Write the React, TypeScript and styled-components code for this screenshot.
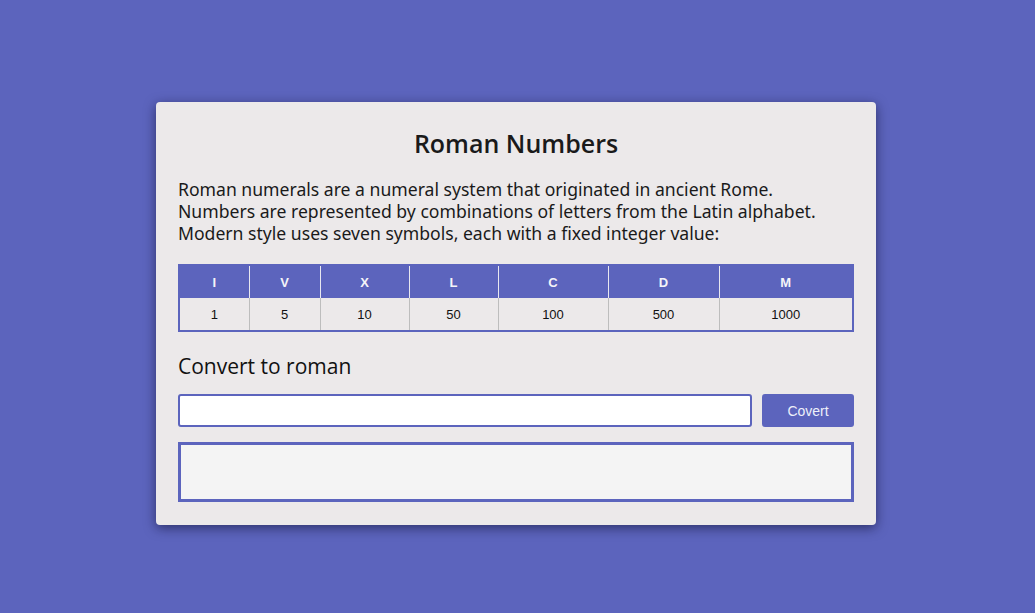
import React, { useState } from "react";
import styled, { createGlobalStyle } from "styled-components";

const Global = createGlobalStyle`
  html, body { margin: 0; padding: 0; background: #5c64bd; }
  * { box-sizing: border-box; }
`;

const Page = styled.div`
  min-height: 613px;
  display: flex;
  justify-content: center;
  align-items: flex-start;
  padding-top: 102px;
`;

const Card = styled.div`
  width: 720px;
  background: #ece9ea;
  border-radius: 4px;
  box-shadow: 0 3px 12px rgba(15, 15, 50, 0.6);
  padding: 22px 22px 23px;
  margin-left: -3px;
`;

const Title = styled.h1`
  margin: 0;
  text-align: center;
  font-family: "Open Sans", sans-serif;
  font-weight: 600;
  font-size: 25px;
  line-height: 38px;
  color: #1a1a1a;
`;

const Intro = styled.p`
  margin: 16px 0 0;
  font-family: "Noto Sans", sans-serif;
  font-size: 17.6px;
  line-height: 22px;
  color: #1a1a1a;
`;

const Table = styled.table`
  margin-top: 20px;
  width: 100%;
  border-collapse: collapse;
  border: 2px solid #5c64bd;
  font-family: "Liberation Sans", Arial, sans-serif;
  font-size: 13px;
`;

const Th = styled.th<{ $w: number }>`
  width: ${(p) => p.$w}px;
  height: 33px;
  background: #5c64bd;
  color: #f4f4f8;
  font-weight: bold;
  text-align: center;
  border-left: 1px solid #e8e8f0;
  &:first-child { border-left: none; }
`;

const Td = styled.td`
  height: 33px;
  text-align: center;
  color: #111;
  border-left: 1px solid #bdbdbd;
  &:first-child { border-left: none; }
`;

const Subtitle = styled.h2`
  margin: 20px 0 0;
  font-family: "Open Sans", sans-serif;
  font-weight: 400;
  font-size: 21px;
  line-height: 28px;
  color: #111;
`;

const Row = styled.div`
  display: flex;
  gap: 10px;
  margin-top: 14px;
`;

const Input = styled.input`
  flex: 1;
  height: 33px;
  border: 2px solid #5c64bd;
  border-radius: 3px;
  background: #fff;
  outline: none;
  font-family: "Liberation Sans", Arial, sans-serif;
  font-size: 14px;
  padding: 0 8px;
`;

const Button = styled.button`
  width: 92px;
  height: 33px;
  border: none;
  border-radius: 3px;
  background: #5c64bd;
  color: #eef0fa;
  font-family: "Liberation Sans", Arial, sans-serif;
  font-size: 14px;
  cursor: pointer;
`;

const Output = styled.div`
  margin-top: 15px;
  height: 60px;
  border: 3px solid #5c64bd;
  background: #f4f4f4;
`;

const symbols: [string, number, number][] = [
  ["I", 1, 70],
  ["V", 5, 71],
  ["X", 10, 89],
  ["L", 50, 89],
  ["C", 100, 110],
  ["D", 500, 111],
  ["M", 1000, 134],
];

export default function App() {
  const [val, setVal] = useState("");
  return (
    <>
      <Global />
      <Page>
        <Card>
          <Title>Roman Numbers</Title>
          <Intro>
            Roman numerals are a numeral system that originated in ancient Rome.
            <br />
            Numbers are represented by combinations of letters from the Latin alphabet.
            <br />
            Modern style uses seven symbols, each with a fixed integer value:
          </Intro>
          <Table>
            <thead>
              <tr>
                {symbols.map(([s, , w]) => (
                  <Th key={s} $w={w}>
                    {s}
                  </Th>
                ))}
              </tr>
            </thead>
            <tbody>
              <tr>
                {symbols.map(([s, v]) => (
                  <Td key={s}>{v}</Td>
                ))}
              </tr>
            </tbody>
          </Table>
          <Subtitle>Convert to roman</Subtitle>
          <Row>
            <Input value={val} onChange={(e) => setVal(e.target.value)} />
            <Button>Covert</Button>
          </Row>
          <Output />
        </Card>
      </Page>
    </>
  );
}
